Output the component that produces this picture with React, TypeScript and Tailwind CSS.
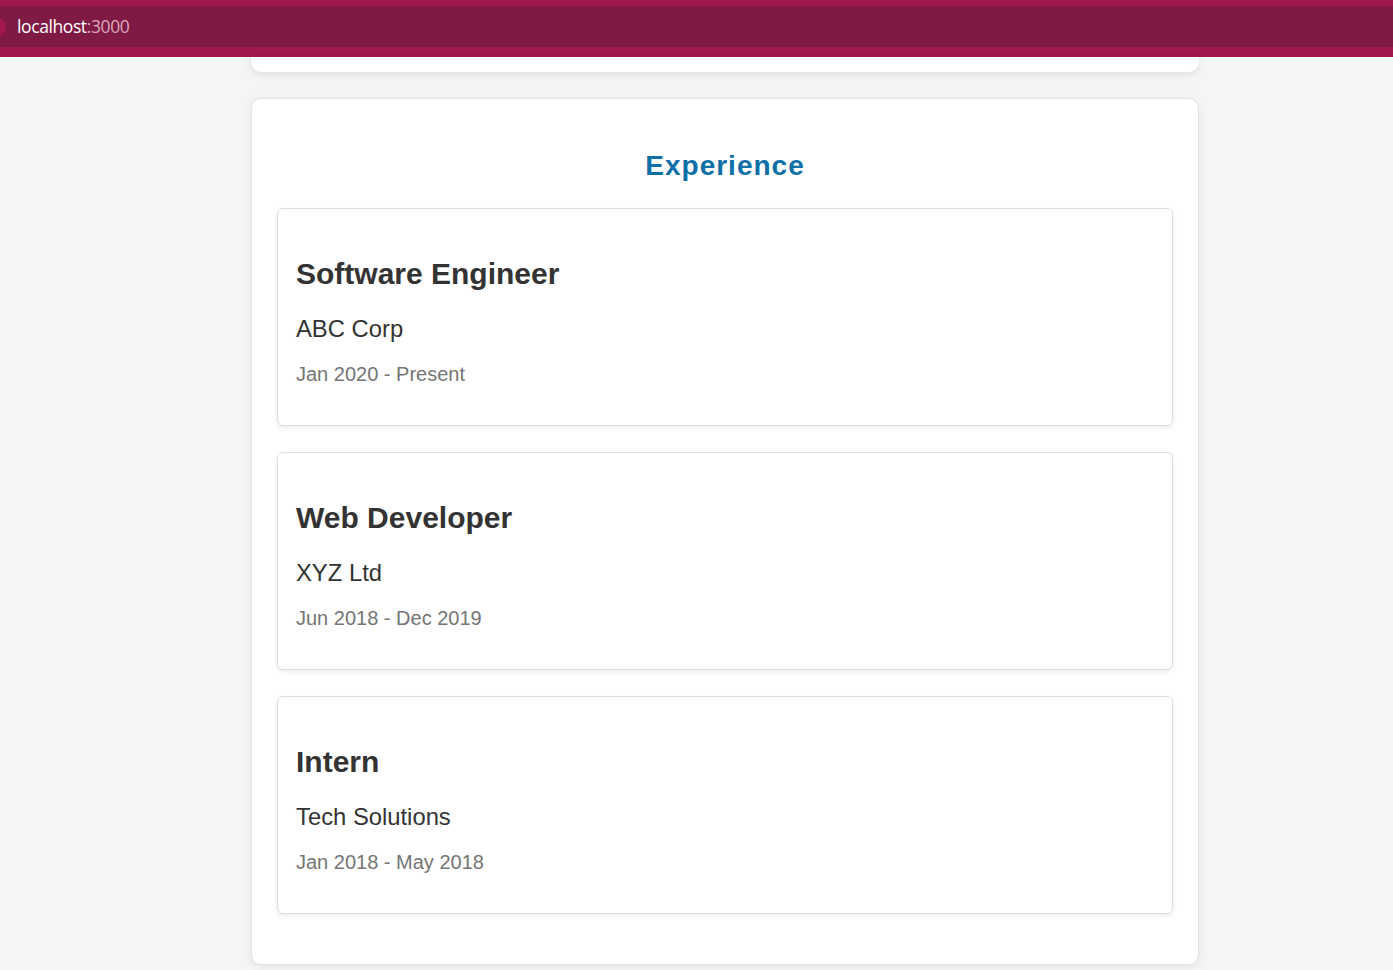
const jobs = [
  { title: "Software Engineer", company: "ABC Corp", period: "Jan 2020 - Present" },
  { title: "Web Developer", company: "XYZ Ltd", period: "Jun 2018 - Dec 2019" },
  { title: "Intern", company: "Tech Solutions", period: "Jan 2018 - May 2018" },
];

function AddressBar() {
  return (
    <div className="h-[57px] bg-[#a1174f] pt-[6px]">
      <div className="flex h-[41px] items-center bg-[#7e1a44]">
        {/* leftover favicon circle, cut off by the window edge */}
        <div className="-ml-[14px] h-[20px] w-[20px] rounded-full bg-[#a3194f]" />
        <span className="ml-[11px] font-['Open_Sans',sans-serif] text-[17.5px] tracking-[-0.4px] text-white">
          localhost<span className="text-[#dba6bb]">:3000</span>
        </span>
      </div>
    </div>
  );
}

function JobCard({ title, company, period }: (typeof jobs)[number]) {
  return (
    <div className="h-[218px] rounded-[6px] border border-[#dedede] bg-white px-[18px] pt-[47px] shadow-[0_2px_5px_rgba(0,0,0,0.08)]">
      <h3 className="text-[30px] font-bold leading-[36px] text-[#333]">{title}</h3>
      <p className="mt-[23px] text-[23.8px] leading-[28px] text-[#333]">{company}</p>
      <p className="mt-[19px] text-[20px] leading-[24px] text-[#757575]">{period}</p>
    </div>
  );
}

export default function App() {
  return (
    <div className="min-h-[970px] bg-[#f4f5f5] font-['Liberation_Sans',Arial,sans-serif]">
      <AddressBar />
      <div className="ml-[251px] w-[948px]">
        {/* bottom edge of the previous section */}
        <div className="h-[15px] rounded-b-[10px] bg-white shadow-[0_2px_8px_rgba(0,0,0,0.1)]" />
        <section className="mt-[26px] rounded-[10px] border border-[#e3e3e3] bg-white px-[25px] pt-[49px] pb-[50px] shadow-[0_2px_8px_rgba(0,0,0,0.08)]">
          <h2 className="text-center text-[28px] font-bold leading-[36px] tracking-[1px] text-[#0f70a8]">
            Experience
          </h2>
          <div className="mt-[24px] flex flex-col gap-[26px]">
            {jobs.map((job) => (
              <JobCard key={job.title} {...job} />
            ))}
          </div>
        </section>
      </div>
    </div>
  );
}
